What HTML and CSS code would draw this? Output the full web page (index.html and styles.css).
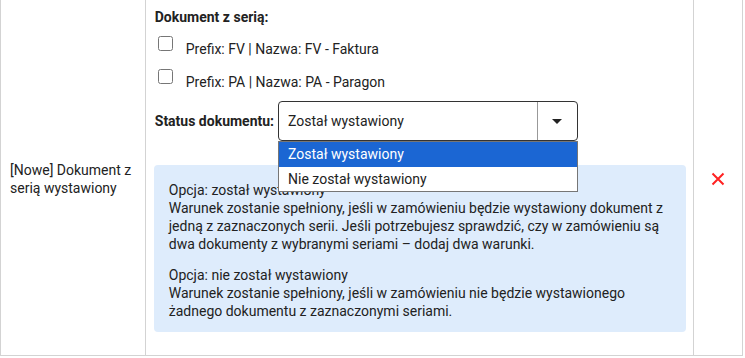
FILE: index.html
```html
<!DOCTYPE html>
<html>
    <head>
        <title>Warunki</title>
        <link rel="stylesheet" href="styles.css">
    </head>
    <body>
        <table class="rules">
            <tr>
                <td class="name">[Nowe] Dokument z serią wystawiony</td>
                <td class="config">
                    <div class="heading">Dokument z serią:</div>
                    <label class="series"><input type="checkbox"> <span>Prefix: FV | Nazwa: FV - Faktura</span></label>
                    <label class="series"><input type="checkbox"> <span>Prefix: PA | Nazwa: PA - Paragon</span></label>
                    <div class="status">
                        <span class="status-label">Status dokumentu:</span>
                        <div class="select">
                            <div class="select-value">Został wystawiony</div>
                            <div class="select-arrow"></div>
                            <ul class="options">
                                <li class="option active">Został wystawiony</li>
                                <li class="option">Nie został wystawiony</li>
                            </ul>
                        </div>
                    </div>
                    <div class="info">
                        <p>Opcja: został wystawiony<br>
                        Warunek zostanie spełniony, jeśli w zamówieniu będzie wystawiony dokument z jedną z zaznaczonych serii. Jeśli potrzebujesz sprawdzić, czy w zamówieniu są dwa dokumenty z wybranymi seriami – dodaj dwa warunki.</p>
                        <p>Opcja: nie został wystawiony<br>
                        Warunek zostanie spełniony, jeśli w zamówieniu nie będzie wystawionego żadnego dokumentu z zaznaczonymi seriami.</p>
                    </div>
                </td>
                <td class="remove">
                    <svg class="x" width="14" height="14" viewBox="0 0 14 14">
                        <path d="M1.5 1.5 L12.5 12.5 M12.5 1.5 L1.5 12.5" stroke="#f22" stroke-width="2" fill="none"/>
                    </svg>
                </td>
            </tr>
        </table>
    </body>
</html>
```

FILE: styles.css
```css
body {
    margin: 0;
    font-family: Roboto, "Liberation Sans", sans-serif;
    font-size: 14px;
    color: #222;
}
.rules {
    border-collapse: collapse;
    width: 743px;
}
.rules td {
    border: 1px solid #d3d3d3;
    border-top: none;
    vertical-align: middle;
}
.name {
    width: 134px;
    padding: 2px 0 0 9px;
    line-height: 18px;
}
.config {
    width: 529px;
    padding: 8px 7px 23px 8px;
}
.remove {
    width: 48px;
    padding: 0;
    text-align: center;
}
.x {
    display: block;
    margin: 2px auto 0;
}
.heading {
    font-weight: bold;
    line-height: 18px;
    padding-left: 1px;
}
.series {
    display: flex;
    align-items: flex-start;
    margin-top: 10px;
    height: 23px;
    line-height: 18px;
}
.series input {
    margin: 0 13px 0 4px;
    width: 15px;
    height: 15px;
}
.series span {
    padding-top: 4px;
}
.status {
    display: flex;
    align-items: center;
    margin-top: 9px;
}
.status-label {
    font-weight: bold;
    padding-left: 1px;
    margin-right: 4px;
}
.select {
    position: relative;
    display: flex;
    width: 298px;
    height: 38px;
    border: 1px solid #333;
    border-radius: 4px;
}
.select-value {
    flex: 1;
    padding: 0 9px;
    line-height: 38px;
    border-right: 1px solid #999;
}
.select-arrow {
    width: 39px;
    position: relative;
}
.select-arrow::after {
    content: "";
    position: absolute;
    left: 14px;
    top: 17px;
    border-left: 5px solid transparent;
    border-right: 5px solid transparent;
    border-top: 5px solid #222;
}
.options {
    position: absolute;
    top: 39px;
    left: -1px;
    width: 298px;
    margin: 0;
    padding: 0;
    list-style: none;
    background: white;
    border: 1px solid #767676;
    z-index: 2;
}
.option {
    padding: 0 9px;
    height: 24px;
    line-height: 24px;
}
.option.active {
    background: #1b66d3;
    color: white;
    height: 25px;
}
.info {
    margin-top: 24px;
    background: #deecfc;
    border-radius: 4px;
    padding: 16px 15px 12px;
    line-height: 18px;
}
.info p {
    margin: 0 0 13px;
}
.info p:last-child {
    margin-bottom: 0;
}
```
